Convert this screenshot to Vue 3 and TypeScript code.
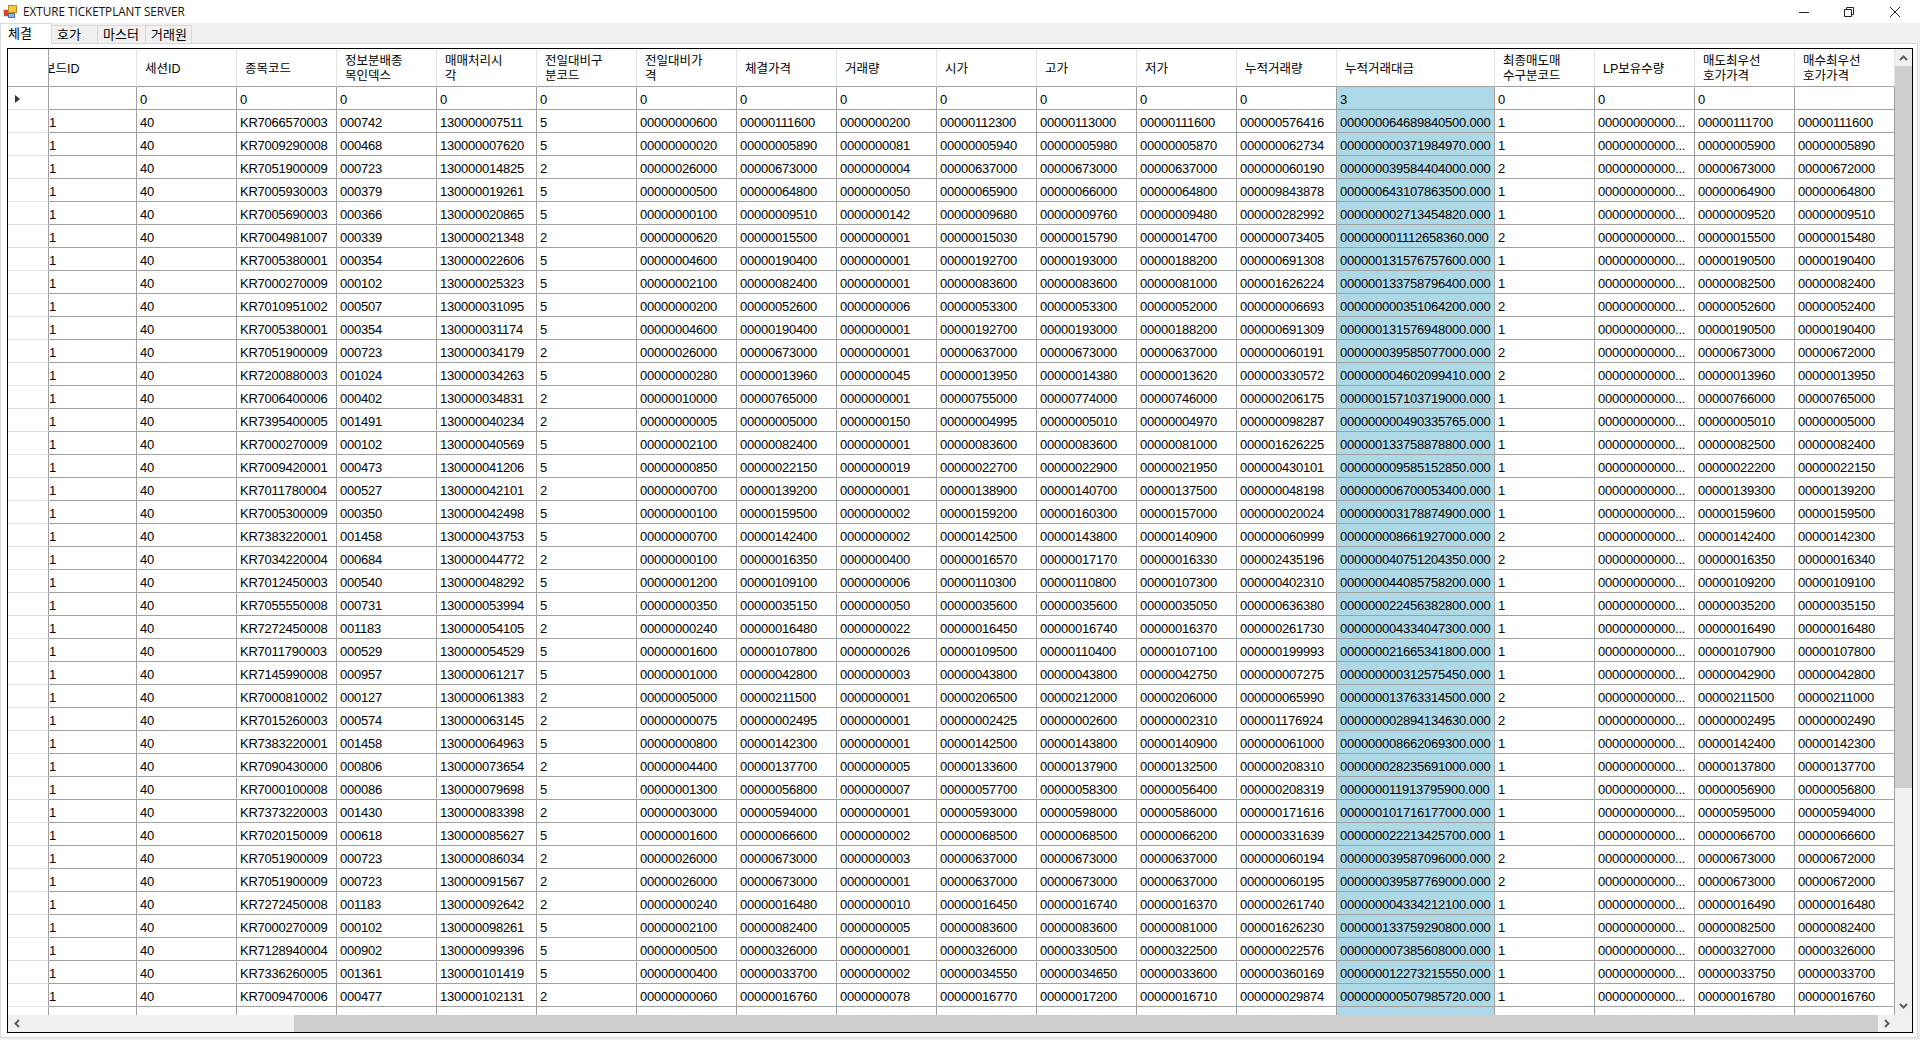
<script setup lang="ts">
const pad = (v: number | string, n: number): string => String(v).padStart(n, '0')

const headers: string[] = [
  '보드ID', '세션ID', '종목코드', '정보분배종\n목인덱스', '매매처리시\n각', '전일대비구\n분코드',
  '전일대비가\n격', '체결가격', '거래량', '시가', '고가', '저가', '누적거래량', '누적거래대금',
  '최종매도매\n수구분코드', 'LP보유수량', '매도최우선\n호가가격', '매수최우선\n호가가격',
]

const raw = `KR7066570003 742 7511 5 600 111600 200 112300 113000 111600 576416 64689840500 1 111700 111600
KR7009290008 468 7620 5 20 5890 81 5940 5980 5870 62734 371984970 1 5900 5890
KR7051900009 723 14825 2 26000 673000 4 637000 673000 637000 60190 39584404000 2 673000 672000
KR7005930003 379 19261 5 500 64800 50 65900 66000 64800 9843878 643107863500 1 64900 64800
KR7005690003 366 20865 5 100 9510 142 9680 9760 9480 282992 2713454820 1 9520 9510
KR7004981007 339 21348 2 620 15500 1 15030 15790 14700 73405 1112658360 2 15500 15480
KR7005380001 354 22606 5 4600 190400 1 192700 193000 188200 691308 131576757600 1 190500 190400
KR7000270009 102 25323 5 2100 82400 1 83600 83600 81000 1626224 133758796400 1 82500 82400
KR7010951002 507 31095 5 200 52600 6 53300 53300 52000 6693 351064200 2 52600 52400
KR7005380001 354 31174 5 4600 190400 1 192700 193000 188200 691309 131576948000 1 190500 190400
KR7051900009 723 34179 2 26000 673000 1 637000 673000 637000 60191 39585077000 2 673000 672000
KR7200880003 1024 34263 5 280 13960 45 13950 14380 13620 330572 4602099410 2 13960 13950
KR7006400006 402 34831 2 10000 765000 1 755000 774000 746000 206175 157103719000 1 766000 765000
KR7395400005 1491 40234 2 5 5000 150 4995 5010 4970 98287 490335765 1 5010 5000
KR7000270009 102 40569 5 2100 82400 1 83600 83600 81000 1626225 133758878800 1 82500 82400
KR7009420001 473 41206 5 850 22150 19 22700 22900 21950 430101 9585152850 1 22200 22150
KR7011780004 527 42101 2 700 139200 1 138900 140700 137500 48198 6700053400 1 139300 139200
KR7005300009 350 42498 5 100 159500 2 159200 160300 157000 20024 3178874900 1 159600 159500
KR7383220001 1458 43753 5 700 142400 2 142500 143800 140900 60999 8661927000 2 142400 142300
KR7034220004 684 44772 2 100 16350 400 16570 17170 16330 2435196 40751204350 2 16350 16340
KR7012450003 540 48292 5 1200 109100 6 110300 110800 107300 402310 44085758200 1 109200 109100
KR7055550008 731 53994 5 350 35150 50 35600 35600 35050 636380 22456382800 1 35200 35150
KR7272450008 1183 54105 2 240 16480 22 16450 16740 16370 261730 4334047300 1 16490 16480
KR7011790003 529 54529 5 1600 107800 26 109500 110400 107100 199993 21665341800 1 107900 107800
KR7145990008 957 61217 5 1000 42800 3 43800 43800 42750 7275 312575450 1 42900 42800
KR7000810002 127 61383 2 5000 211500 1 206500 212000 206000 65990 13763314500 2 211500 211000
KR7015260003 574 63145 2 75 2495 1 2425 2600 2310 1176924 2894134630 2 2495 2490
KR7383220001 1458 64963 5 800 142300 1 142500 143800 140900 61000 8662069300 1 142400 142300
KR7090430000 806 73654 2 4400 137700 5 133600 137900 132500 208310 28235691000 1 137800 137700
KR7000100008 86 79698 5 1300 56800 7 57700 58300 56400 208319 11913795900 1 56900 56800
KR7373220003 1430 83398 2 3000 594000 1 593000 598000 586000 171616 101716177000 1 595000 594000
KR7020150009 618 85627 5 1600 66600 2 68500 68500 66200 331639 22213425700 1 66700 66600
KR7051900009 723 86034 2 26000 673000 3 637000 673000 637000 60194 39587096000 2 673000 672000
KR7051900009 723 91567 2 26000 673000 1 637000 673000 637000 60195 39587769000 2 673000 672000
KR7272450008 1183 92642 2 240 16480 10 16450 16740 16370 261740 4334212100 1 16490 16480
KR7000270009 102 98261 5 2100 82400 5 83600 83600 81000 1626230 133759290800 1 82500 82400
KR7128940004 902 99396 5 500 326000 1 326000 330500 322500 22576 7385608000 1 327000 326000
KR7336260005 1361 101419 5 400 33700 2 34550 34650 33600 360169 12273215550 1 33750 33700
KR7009470006 477 102131 2 60 16760 78 16770 17200 16710 29874 507985720 1 16780 16760
KR7000120006 94 103244 2 300 95400 1 95100 96200 94800 41275 3930128000 1 95500 95400`

const rows: string[][] = raw.split('\n').map((line) => {
  const f = line.trim().split(' ')
  return [
    '1', '40', f[0], pad(f[1], 6), '130000' + pad(f[2], 6), f[3], pad(f[4], 11), pad(f[5], 11),
    pad(f[6], 10), pad(f[7], 11), pad(f[8], 11), pad(f[9], 11), pad(f[10], 12),
    pad(f[11], 18) + '.000', f[12], '00000000000...', pad(f[13], 11), pad(f[14], 11),
  ]
})

const editRow: string[] = ['', '0', '0', '0', '0', '0', '0', '0', '0', '0', '0', '0', '0', '3', '0', '0', '0', '']
const allRows: string[][] = [editRow, ...rows]
const tabs: string[] = ['체결', '호가', '마스터', '거래원']
</script>

<template>
  <div class="window">
    <div class="titlebar">
      <svg class="app-icon" width="14" height="13" viewBox="0 0 14 13">
        <rect x="0" y="4" width="6" height="8" fill="#d8dde6" />
        <rect x="1" y="5" width="4" height="6" fill="#d9402e" />
        <rect x="5" y="0" width="9" height="8" fill="#b58a2a" />
        <rect x="6" y="1" width="7" height="6" fill="#f6c93c" />
        <rect x="5" y="8" width="7" height="5" fill="#3f6fc4" />
        <rect x="6" y="9" width="5" height="3" fill="#8fb2ea" />
      </svg>
      <span class="title">EXTURE TICKETPLANT SERVER</span>
      <div class="controls">
        <svg class="ctl ctl-min" width="10" height="10" viewBox="0 0 10 10"><path d="M0 5.5H10" stroke="#222" fill="none" /></svg>
        <svg class="ctl ctl-max" width="10" height="10" viewBox="0 0 10 10"><path d="M.5 2.5h7v7h-7zM2.5 2.5v-2h7v7h-2" stroke="#222" fill="none" /></svg>
        <svg class="ctl ctl-close" width="10" height="10" viewBox="0 0 10 10"><path d="M0 0L10 10M10 0L0 10" stroke="#222" fill="none" /></svg>
      </div>
    </div>

    <div class="tabstrip">
      <div v-for="(t, i) in tabs" :key="t" class="tab" :class="['tab' + i, { active: i === 0 }]">{{ t }}</div>
    </div>

    <div class="panel">
      <div class="grid">
        <div class="grid-main">
          <div class="viewport">
            <div class="row head">
              <div class="corner"></div>
              <div v-for="(h, i) in headers" :key="h" class="hcell" :class="{ 'hcell-clip': i === 0 }">
                <span>{{ h }}</span>
              </div>
            </div>
            <div v-for="(r, ri) in allRows" :key="ri" class="row">
              <div class="rowhead"><span v-if="ri === 0" class="pointer"></span></div>
              <div
                v-for="(c, ci) in r"
                :key="ci"
                class="cell"
                :class="{ hl: ci === 13, first: ci === 0 }"
              >{{ c }}</div>
            </div>
          </div>
          <div class="vscroll">
            <svg class="arrow arrow-up" width="9" height="6" viewBox="0 0 9 6"><path d="M1 5L4.5 1.5L8 5" /></svg>
            <div class="vthumb"></div>
            <svg class="arrow arrow-down" width="9" height="6" viewBox="0 0 9 6"><path d="M1 1L4.5 4.5L8 1" /></svg>
          </div>
        </div>
        <div class="hscroll">
          <svg class="arrow arrow-left" width="6" height="9" viewBox="0 0 6 9"><path d="M5 1L1.5 4.500L5 8" /></svg>
          <div class="hthumb"></div>
          <svg class="arrow arrow-right" width="6" height="9" viewBox="0 0 6 9"><path d="M1 1L4.5 4.500L1 8" /></svg>
        </div>
      </div>
    </div>
  </div>
</template>

<style scoped>
.window {
  width: 1920px;
  height: 1040px;
  display: flex;
  flex-direction: column;
  background: #f0f0f0;
  overflow: hidden;
  font-family: "Liberation Sans", "Noto Sans CJK KR", sans-serif;
  color: #000;
}
.titlebar {
  height: 23px;
  flex: none;
  display: flex;
  align-items: center;
  background: #fff;
  padding-left: 3px;
}
.app-icon {
  margin-right: 6px;
}
.title {
  font-family: "Open Sans", "Liberation Sans", sans-serif;
  font-size: 11.7px;
  line-height: 22px;
  padding-bottom: 1px;
  color: #111;
}
.controls {
  margin-left: auto;
  display: flex;
  align-items: center;
  height: 20px;
  padding-right: 20px;
}
.ctl {
  display: block;
}
.ctl-max {
  margin-left: 35px;
}
.ctl-close {
  margin-left: 36px;
}
.tabstrip {
  height: 20px;
  flex: none;
  display: flex;
  align-items: flex-start;
  padding-top: 2px;
  box-sizing: border-box;
  position: relative;
  z-index: 1;
}
.tab {
  height: 18px;
  box-sizing: border-box;
  border: 1px solid #d9d9d9;
  border-left: 0;
  border-bottom: 0;
  font-size: 13px;
  line-height: 16px;
  font-family: "Noto Sans CJK KR", sans-serif;
  text-align: left;
  padding-left: 5px;
}
.tab0 {
  width: 52px;
  height: 21px;
  margin-top: -2px;
  background: #fff;
  border-left: 1px solid #d9d9d9;
  line-height: 17px;
  padding-left: 7px;
}
.tab1 {
  width: 46px;
}
.tab2 {
  width: 48px;
}
.tab3 {
  width: 46px;
}
.panel {
  flex: 1;
  min-height: 0;
  margin: 0 2px 2px 0;
  background: #fff;
  border: 1px solid #d9d9d9;
  padding: 4px 4px 4px 6px;
  display: flex;
}
.grid {
  flex: 1;
  min-width: 0;
  border: 1px solid #000;
  display: flex;
  flex-direction: column;
  background: #fff;
}
.grid-main {
  flex: 1;
  min-height: 0;
  display: flex;
}
.viewport {
  width: 1887px;
  flex: none;
  overflow: hidden;
}
.row {
  display: grid;
  grid-template-columns: 41px 88px repeat(12, 100px) 158px repeat(4, 100px);
  height: 23px;
}
.row.head {
  height: 38px;
}
.corner {
  border-right: 1px solid #a0a0a0;
  border-bottom: 1px solid #a0a0a0;
}
.hcell {
  box-sizing: border-box;
  border-right: 1px solid #e3e3e3;
  border-bottom: 1px solid #a0a0a0;
  padding: 3px 0 0 8px;
  display: flex;
  align-items: center;
  overflow: hidden;
  font-size: 12.5px;
  line-height: 15px;
  white-space: pre-line;
}
.hcell-clip {
  padding-left: 0;
  white-space: nowrap;
}
.hcell-clip span {
  margin-left: -5px;
}
.rowhead {
  box-sizing: border-box;
  position: relative;
  border-right: 1px solid #a0a0a0;
  border-bottom: 1px solid #e3e3e3;
}
.pointer {
  position: absolute;
  left: 7px;
  top: 8px;
  width: 0;
  height: 0;
  border-left: 5px solid #333;
  border-top: 4.500px solid transparent;
  border-bottom: 4.500px solid transparent;
}
.cell {
  box-sizing: border-box;
  border-right: 1px solid #a0a0a0;
  border-bottom: 1px solid #a0a0a0;
  padding: 3px 0 0 3px;
  font-size: 13px;
  letter-spacing: -0.23px;
  line-height: 20px;
  white-space: nowrap;
  overflow: hidden;
}
.cell.first {
  padding-left: 0;
}
.cell.hl {
  background: #add8e6;
}
.vscroll {
  width: 17px;
  flex: none;
  display: flex;
  flex-direction: column;
  align-items: center;
  background: #f0f0f0;
}
.vthumb {
  width: 17px;
  height: 722px;
  background: #cdcdcd;
  flex: none;
}
.arrow {
  display: block;
  flex: none;
}
.arrow path {
  fill: none;
  stroke: #606060;
  stroke-width: 2;
}
.arrow-up {
  margin: 6px 0 5px;
}
.arrow-down {
  margin-top: auto;
  margin-bottom: 6px;
}
.hscroll {
  height: 17px;
  flex: none;
  display: flex;
  align-items: center;
  background: #f0f0f0;
}
.arrow-left {
  margin-left: 6px;
}
.hthumb {
  width: 1584px;
  height: 17px;
  margin-left: 274px;
  background: #cdcdcd;
  flex: none;
}
.arrow-right {
  margin-left: 6px;
}
</style>

<style>
html, body {
  margin: 0;
  overflow: hidden;
}
</style>
